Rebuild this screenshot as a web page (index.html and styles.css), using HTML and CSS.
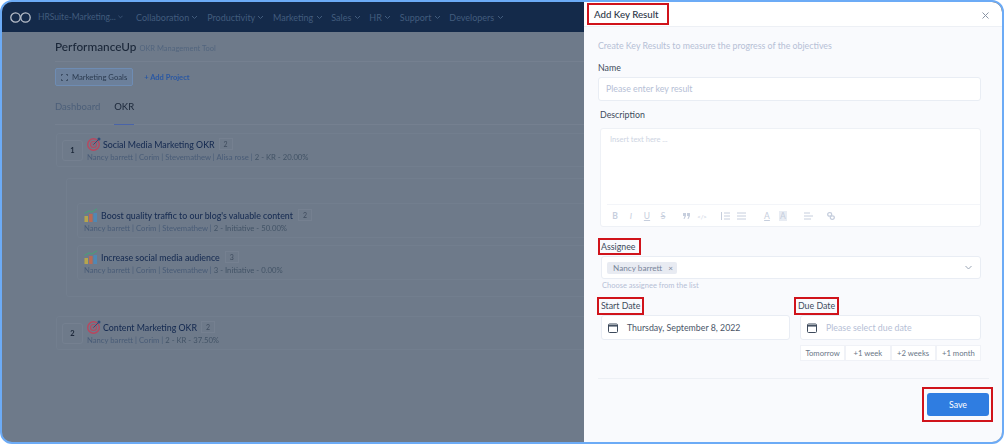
FILE: index.html
```html
<!DOCTYPE html>
<html lang="en">
<head>
  <meta charset="UTF-8">
  <title>Add Key Result</title>
  <link rel="stylesheet" href="styles.css">
</head>
<body>

<div class="ventana">

  <!-- Pagina de fondo, oscurecida por el panel -->
  <div class="fondo">
    <nav class="topbar">
      <svg class="logo" width="21" height="11" viewBox="0 0 21 11" fill="none" stroke="#b8bfca" stroke-width="1.3"><circle cx="5.5" cy="5.5" r="4.7"/><circle cx="15.5" cy="5.5" r="4.7"/></svg>
      <span class="suite">HRSuite-Marketing... <svg class="flecha" width="5" height="4" viewBox="0 0 6 4"><path d="M.5.5 3 3 5.5.5"/></svg></span>
      <ul class="menu">
        <li>Collaboration <svg class="flecha" width="7" height="5" viewBox="0 0 7 5"><path d="M1 1l2.5 2.5L6 1"/></svg></li>
        <li>Productivity <svg class="flecha" width="7" height="5" viewBox="0 0 7 5"><path d="M1 1l2.5 2.5L6 1"/></svg></li>
        <li>Marketing <svg class="flecha" width="7" height="5" viewBox="0 0 7 5"><path d="M1 1l2.5 2.5L6 1"/></svg></li>
        <li>Sales <svg class="flecha" width="7" height="5" viewBox="0 0 7 5"><path d="M1 1l2.5 2.5L6 1"/></svg></li>
        <li>HR <svg class="flecha" width="7" height="5" viewBox="0 0 7 5"><path d="M1 1l2.5 2.5L6 1"/></svg></li>
        <li>Support <svg class="flecha" width="7" height="5" viewBox="0 0 7 5"><path d="M1 1l2.5 2.5L6 1"/></svg></li>
        <li>Developers <svg class="flecha" width="7" height="5" viewBox="0 0 7 5"><path d="M1 1l2.5 2.5L6 1"/></svg></li>
      </ul>
    </nav>

    <div class="contenido">
      <div class="titulo-app">
        <h1>PerformanceUp</h1>
        <span>OKR Management Tool</span>
      </div>

      <div class="proyectos">
        <button class="proyecto">
          <svg width="7" height="7" viewBox="0 0 9 9" fill="none" stroke="#2b3a4f"><path d="M.5 2.5v-2h2M6.5.5h2v2M8.5 6.5v2h-2M2.5 8.5h-2v-2"/></svg>
          Marketing Goals
        </button>
        <span class="add-project">+ Add Project</span>
      </div>

      <div class="tabs">
        <span class="tab">Dashboard</span>
        <span class="tab activo">OKR</span>
      </div>

      <div class="okr">
        <span class="numero">1</span>
        <div>
          <div class="okr-titulo">
            <svg width="14" height="14" viewBox="0 0 14 14" fill="none"><circle cx="6.5" cy="7.5" r="5.8" stroke="#b8475f" stroke-width="1.4"/><circle cx="6.5" cy="7.5" r="3" stroke="#b8475f" stroke-width="1.1"/><circle cx="6.5" cy="7.5" r="1" fill="#b8475f"/><path d="M6.5 7.5 12 2" stroke="#2f4f7a"/><circle cx="12" cy="2" r="1.5" fill="#2f4f7a"/></svg>
            <h3>Social Media Marketing OKR</h3>
            <span class="cuenta">2</span>
          </div>
          <p class="meta">Nancy barrett | Corim | Stevemathew | Alisa rose | <b>2 - KR - 20.00%</b></p>
        </div>
      </div>

      <div class="iniciativas">
        <div class="iniciativa">
          <div class="okr-titulo">
            <svg width="14" height="14" viewBox="0 0 14 14" fill="none"><rect x=".5" y="8" width="3.5" height="6" fill="#b5a54d"/><rect x="5" y="6" width="3.5" height="8" fill="#b96a55"/><rect x="9.5" y="5" width="3.5" height="9" fill="#4f88b5"/><path d="M.5 5.5 5 3l3 1L13 .8" stroke="#4f9a7c" stroke-width="1.2"/></svg>
            <h3>Boost quality traffic to our blog's valuable content</h3>
            <span class="cuenta">2</span>
          </div>
          <p class="meta">Nancy barrett | Corim | Stevemathew | <b>2 - Initiative - 50.00%</b></p>
        </div>
        <div class="iniciativa">
          <div class="okr-titulo">
            <svg width="14" height="14" viewBox="0 0 14 14" fill="none"><rect x=".5" y="8" width="3.5" height="6" fill="#b5a54d"/><rect x="5" y="6" width="3.5" height="8" fill="#b96a55"/><rect x="9.5" y="5" width="3.5" height="9" fill="#4f88b5"/><path d="M.5 5.5 5 3l3 1L13 .8" stroke="#4f9a7c" stroke-width="1.2"/></svg>
            <h3>Increase social media audience</h3>
            <span class="cuenta">3</span>
          </div>
          <p class="meta">Nancy barrett | Corim | Stevemathew | <b>3 - Initiative - 0.00%</b></p>
        </div>
      </div>

      <div class="okr segundo">
        <span class="numero">2</span>
        <div>
          <div class="okr-titulo">
            <svg width="14" height="14" viewBox="0 0 14 14" fill="none"><circle cx="6.5" cy="7.5" r="5.8" stroke="#b8475f" stroke-width="1.4"/><circle cx="6.5" cy="7.5" r="3" stroke="#b8475f" stroke-width="1.1"/><circle cx="6.5" cy="7.5" r="1" fill="#b8475f"/><path d="M6.5 7.5 12 2" stroke="#2f4f7a"/><circle cx="12" cy="2" r="1.5" fill="#2f4f7a"/></svg>
            <h3>Content Marketing OKR</h3>
            <span class="cuenta">2</span>
          </div>
          <p class="meta">Nancy barrett | Corim | <b>2 - KR - 37.50%</b></p>
        </div>
      </div>
    </div>
  </div>

  <!-- Panel lateral -->
  <aside class="panel">
    <header class="panel-head">
      <h2 class="marca">Add Key Result</h2>
      <svg class="cerrar" width="7" height="7" viewBox="0 0 7 7" stroke="#8a95a5" stroke-width="1"><path d="M.5.5l6 6M6.5.5l-6 6"/></svg>
    </header>

    <div class="panel-body">
      <p class="ayuda">Create Key Results to measure the progress of the objectives</p>

      <label class="etiqueta nombre-label">Name</label>
      <div class="campo nombre">Please enter key result</div>

      <label class="etiqueta desc">Description</label>
      <div class="editor">
        <div class="editor-texto">Insert text here ...</div>
        <div class="barra">
          <span class="herr b">B</span>
          <span class="herr i">I</span>
          <span class="herr u">U</span>
          <span class="herr s">S</span>
          <span class="herr sep7"><svg width="7" height="6" viewBox="0 0 7 6" fill="#c6cedd"><path d="M0 0h3v3L1.5 6h-1l1-3H0zM4 0h3v3L5.5 6h-1l1-3H4z"/></svg></span>
          <span class="herr c">&lt;/&gt;</span>
          <span class="herr sep7"><svg width="9" height="8" viewBox="0 0 9 8" stroke="#c6cedd" fill="none"><path d="M3 1h6M3 4h6M3 7h6M.5 0v8"/></svg></span>
          <span class="herr"><svg width="9" height="8" viewBox="0 0 9 8" stroke="#c6cedd" fill="none"><path d="M0 1h9M0 4h9M0 7h9"/></svg></span>
          <span class="herr a sep10">A</span>
          <span class="herr"><span class="a2">A</span></span>
          <span class="herr sep9"><svg width="9" height="8" viewBox="0 0 9 8" stroke="#c6cedd" fill="none"><path d="M0 1h6M0 4h9M0 7h7"/></svg></span>
          <span class="herr sep7"><svg width="8" height="8" viewBox="0 0 8 8" stroke="#c6cedd" stroke-width="1.3" fill="none"><rect x=".7" y=".7" width="4" height="3.5" rx="1.7"/><rect x="3.3" y="3.8" width="4" height="3.5" rx="1.7"/></svg></span>
        </div>
      </div>

      <label class="etiqueta marca asignado">Assignee</label>
      <div class="campo selector">
        <span class="chip">Nancy barrett <i>×</i></span>
        <svg width="7" height="5" viewBox="0 0 7 5" fill="none" stroke="#9aa5b5"><path d="M.5 1 3.5 4l3-3"/></svg>
      </div>
      <p class="nota">Choose assignee from the list</p>

      <div class="fechas">
        <div class="fecha inicio">
          <label class="etiqueta marca">Start Date</label>
          <div class="campo con-icono">
            <svg width="10" height="10" viewBox="0 0 10 10" fill="none" stroke="#3d4a5c"><rect x=".5" y="1" width="9" height="8.5" rx="1"/><path d="M.5 2.8h9" stroke-width="1.5"/></svg>
            <span class="valor">Thursday, September 8, 2022</span>
          </div>
        </div>
        <div class="fecha fin">
          <label class="etiqueta marca">Due Date</label>
          <div class="campo con-icono">
            <svg width="10" height="10" viewBox="0 0 10 10" fill="none" stroke="#3d4a5c"><rect x=".5" y="1" width="9" height="8.5" rx="1"/><path d="M.5 2.8h9" stroke-width="1.5"/></svg>
            <span>Please select due date</span>
          </div>
          <div class="atajos">
            <span>Tomorrow</span><span>+1 week</span><span>+2 weeks</span><span>+1 month</span>
          </div>
        </div>
      </div>

      <div class="pie">
        <div class="marca marca-boton"><button class="guardar">Save</button></div>
      </div>
    </div>
  </aside>
</div>

</body>
</html>
```

FILE: styles.css
```css
/* Marco */
html, body {
  margin: 0;
  background: #fff;
}
body {
  font-family: "Lato", "Noto Sans", sans-serif;
  color: #2f3b4d;
}
h1, h2, h3, p, ul {
  margin: 0;
  padding: 0;
}
.ventana {
  position: relative;
  width: 1004px;
  height: 444px;
  box-sizing: border-box;
  border: 2px solid #6cabf6;
  border-radius: 12px;
  overflow: hidden;
  background: #6e7a8a;
}

/* Pagina de fondo */
.fondo {
  width: 1000px;
  height: 440px;
  overflow: hidden;
  filter: blur(.7px);
}
.topbar {
  display: flex;
  align-items: center;
  height: 30px;
  background: #142a4a;
  color: #425c7d;
  font-size: 9px;
  padding-left: 8px;
}
.logo {
  margin-right: 7px;
}
.suite {
  width: 98px;
  font-size: 8.5px;
}
.flecha {
  fill: none;
  stroke: currentColor;
  vertical-align: 1px;
}
.menu {
  display: flex;
  gap: 8.7px;
  list-style: none;
}
.contenido {
  padding-left: 53px;
}
.titulo-app {
  display: flex;
  align-items: baseline;
  gap: 3px;
  height: 29px;
  padding-top: 7px;
  box-sizing: border-box;
}
.titulo-app h1 {
  font-size: 11.8px;
  font-weight: 500;
  color: #1a2638;
}
.titulo-app span {
  font-size: 7.5px;
  color: #52657e;
}
.proyectos {
  display: flex;
  align-items: center;
  gap: 11px;
  padding-top: 6px;
  border-top: 1px solid #758090;
}
.proyecto {
  display: flex;
  align-items: center;
  gap: 4px;
  height: 18px;
  padding: 0 5px;
  border: 1px solid #6e8cb3;
  border-radius: 2px;
  background: #6c809b;
  font: inherit;
  font-size: 7.7px;
  color: #2b3a4f;
}
.add-project {
  font-size: 7.5px;
  font-weight: 700;
  color: #2a58a3;
}
.tabs {
  display: flex;
  gap: 14px;
  height: 26px;
  margin-top: 12px;
  border-bottom: 1px solid #758090;
  font-size: 9.5px;
  line-height: 18px;
}
.tab {
  color: #4c5f79;
}
.tab.activo {
  color: #1a2638;
  border-bottom: 1px solid #4a64a8;
  height: 26px;
}
.okr {
  display: flex;
  align-items: center;
  gap: 4px;
  height: 34px;
  box-sizing: border-box;
  margin: 8px 0 0 1px;
  padding-left: 5px;
  border: 1px solid #727e8e;
  border-radius: 3px;
}
.segundo {
  margin-top: 19px;
}
.numero {
  width: 21px;
  height: 21px;
  box-sizing: border-box;
  line-height: 19px;
  text-align: center;
  font-size: 7.5px;
  font-weight: 700;
  color: #1a2638;
  border: 1px solid #758090;
  border-radius: 3px;
}
.okr-titulo {
  display: flex;
  align-items: center;
  gap: 2px;
  height: 14px;
}
.okr-titulo svg {
  flex: none;
}
.iniciativa .okr-titulo {
  gap: 3px;
}
.okr-titulo h3 {
  font-size: 8.8px;
  font-weight: 500;
  color: #172c52;
}
.cuenta {
  padding: 1px 4px;
  margin-left: 2px;
  border: 1px solid #758090;
  font-size: 7px;
  color: #3f4c5e;
}
.meta {
  font-size: 7.7px;
  line-height: 12px;
  color: #495c77;
  white-space: nowrap;
}
.meta b {
  font-weight: 400;
  color: #425366;
}
.iniciativas {
  margin: 11px 0 0 11px;
  padding: 24px 0 0 10px;
  height: 119px;
  box-sizing: border-box;
  border: 1px solid #727e8e;
  border-radius: 3px;
}
.iniciativa {
  height: 35px;
  margin-bottom: 7px;
  padding: 4px 6px;
  box-sizing: border-box;
  border: 1px solid #727e8e;
  border-radius: 3px;
}

/* Panel lateral */
.panel {
  position: absolute;
  top: 0;
  right: 0;
  width: 418px;
  height: 440px;
  background: #f9fafd;
  font-size: 8.8px;
}
.panel-head {
  display: flex;
  justify-content: space-between;
  align-items: flex-start;
  height: 25px;
  box-sizing: border-box;
  padding: 1px 13px 0 3px;
  background: #fff;
  border-bottom: 1px solid #edf0f5;
}
.panel-head h2 {
  height: 22px;
  line-height: 18px;
  box-sizing: border-box;
  padding: 0 8px 0 5px;
  font-size: 9.7px;
  font-weight: 500;
  color: #2c3648;
}
.cerrar {
  margin-top: 9px;
}
.marca {
  border: 2px solid #d0131b;
}
.panel-body {
  padding: 13px 21px 0 14px;
}
.ayuda {
  line-height: 12px;
  color: #b6c0d6;
}
.etiqueta {
  display: block;
  width: fit-content;
  line-height: 12px;
  color: #3d4a5c;
}
.campo {
  background: #fff;
  border: 1px solid #e9edf4;
  border-radius: 3px;
  box-sizing: border-box;
  color: #b6c0d6;
}
.nombre-label {
  margin-top: 10px;
}
.nombre {
  height: 24px;
  line-height: 22px;
  padding-left: 7px;
  margin-top: 3px;
}
.desc {
  margin: 8px 0 0 2px;
}
.editor {
  margin: 7px 0 0 2px;
  height: 99px;
  background: #fff;
  border: 1px solid #eef1f6;
  border-radius: 3px;
  box-sizing: border-box;
}
.editor-texto {
  height: 75px;
  box-sizing: border-box;
  padding: 6px 9px;
  font-size: 7.5px;
  color: #cdd4e2;
}
.barra {
  display: flex;
  align-items: center;
  height: 22px;
  margin-left: 6px;
  border-top: 1px solid #f3f5f9;
}
.herr {
  display: flex;
  justify-content: center;
  flex: none;
  width: 16px;
  font-size: 8.5px;
  color: #c6cedd;
}
.b { font-weight: 700; }
.i { font-style: italic; }
.u { text-decoration: underline; }
.s { text-decoration: line-through; }
.c { font-size: 6px; }
.a { text-decoration: underline; }
.a2 { padding: 0 1px; background: #e8ecf3; }
.sep7 { margin-left: 7px; }
.sep9 { margin-left: 9px; }
.sep10 { margin-left: 10px; }

.asignado {
  box-sizing: border-box;
  height: 17px;
  margin-top: 11px;
  padding: 0 4px 0 1px;
  line-height: 13px;
}
.selector {
  display: flex;
  justify-content: space-between;
  align-items: center;
  height: 23px;
  margin: 1px 0 0 3px;
  padding: 0 8px 0 5px;
}
.chip {
  padding: 1px 4px 1px 6px;
  background: #e8ebf2;
  border-radius: 2px;
  font-size: 8.2px;
  line-height: 10px;
  color: #7a869a;
}
.chip i {
  font-style: normal;
  margin-left: 4px;
}
.nota {
  margin: 2px 0 0 4px;
  font-size: 7.5px;
  line-height: 10px;
  color: #b6c0d6;
}
.fechas {
  display: flex;
  gap: 4px;
  margin: 6px 0 0 -1px;
}
.inicio {
  width: 193px;
}
.fin {
  width: 187px;
}
.fecha .marca {
  box-sizing: border-box;
  height: 18px;
  padding: 0 2px;
  line-height: 14px;
}
.con-icono {
  display: flex;
  align-items: center;
  gap: 9px;
  height: 25px;
  margin-left: 4px;
  padding-left: 6px;
}
.fin .con-icono,
.atajos {
  margin-left: 6px;
}
.valor {
  color: #4a5568;
}
.atajos {
  display: flex;
  margin-top: 5px;
  font-size: 7.7px;
  color: #6a7687;
}
.atajos span {
  width: 45px;
  flex: auto;
  height: 16px;
  line-height: 15px;
  text-align: center;
  background: #fff;
  border: 1px solid #f0f2f7;
  box-sizing: border-box;
}
.pie {
  display: flex;
  justify-content: flex-end;
  margin: 17px -8px 0 0;
  padding-top: 8px;
  border-top: 1px solid #edf0f5;
}
.marca-boton {
  margin-right: -4px;
  padding: 4px 2px 4px 3px;
}
.guardar {
  display: block;
  width: 62px;
  height: 23px;
  border: 0;
  border-radius: 3px;
  background: #2f7de1;
  color: #fff;
  font: inherit;
  font-size: 8.8px;
}
```
